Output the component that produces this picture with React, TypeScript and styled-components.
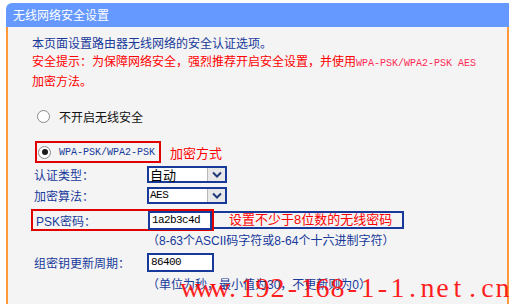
import styled, { createGlobalStyle } from 'styled-components';

const GlobalStyle = createGlobalStyle`
  html, body {
    margin: 0;
    padding: 0;
    background: #ffffff;
  }
  body {
    font-family: "Liberation Sans", "Noto Sans CJK SC", sans-serif;
    font-size: 12px;
  }
`;

const NAVY = '#17399a';
const RED = '#ff0000';
const ORANGE = '#ff9a3c';

const Page = styled.div`
  position: relative;
  width: 512px;
  height: 304px;
  overflow: hidden;
  box-sizing: border-box;
  padding: 3px 0 0 6px;
`;

const Panel = styled.div`
  width: 503px;
`;

const Header = styled.div`
  height: 24px;
  line-height: 24px;
  padding-left: 7px;
  background: #6699ff;
  border-top-left-radius: 6px;
  color: #ffffff;
  font-size: 12px;
  font-family: "Noto Sans CJK SC", sans-serif;
`;

const Content = styled.div`
  height: 277px;
  box-sizing: border-box;
  padding: 8px 0 0 24px;
  background: #f4f4f4;
  border-left: 2px solid ${ORANGE};
  border-right: 2px solid ${ORANGE};
`;

const Text = styled.p<{ $tone?: 'red' }>`
  margin: 0;
  line-height: 18px;
  white-space: nowrap;
  color: ${({ $tone }) => ($tone === 'red' ? RED : NAVY)};
`;

const Mono = styled.span<{ $color?: string }>`
  font-family: "Liberation Mono", monospace;
  font-size: 10px;
  color: ${({ $color }) => $color || 'inherit'};
`;

const RadioRow = styled.label`
  display: flex;
  align-items: center;
  height: 18px;
  margin-top: 16px;
  padding-left: 5px;
  gap: 9px;
  color: #111;
  font-size: 12px;
`;

const Radio = styled.span<{ $checked?: boolean }>`
  position: relative;
  flex: 0 0 13px;
  width: 13px;
  height: 13px;
  box-sizing: border-box;
  border-radius: 50%;
  border: 1px solid #8a8a8a;
  background: #ffffff;

  &::after {
    content: '';
    display: ${({ $checked }) => ($checked ? 'block' : 'none')};
    position: absolute;
    left: 2.5px;
    top: 2.5px;
    width: 6px;
    height: 6px;
    border-radius: 50%;
    background: #1a1a1a;
  }
`;

const MethodRow = styled.div`
  display: flex;
  align-items: center;
  margin-top: 16px;
`;

const MethodBox = styled.div`
  display: flex;
  align-items: center;
  gap: 8px;
  height: 22px;
  box-sizing: border-box;
  margin-left: 3px;
  padding: 0 4px 0 1px;
  border: 2px solid #e00000;
  color: ${NAVY};
`;

const MethodNote = styled.span`
  margin-left: 9px;
  color: ${RED};
  font-size: 13px;
`;

const FieldRow = styled.div<{ $top?: number }>`
  display: flex;
  align-items: center;
  height: 21px;
  margin-top: ${({ $top }) => $top ?? 0}px;
`;

const Label = styled.span<{ $w?: number }>`
  flex: 0 0 ${({ $w }) => $w ?? 113}px;
  padding-left: 2px;
  color: ${NAVY};
`;

const Select = styled.div<{ $mono?: boolean }>`
  display: flex;
  align-items: center;
  width: 80px;
  height: 17px;
  box-sizing: border-box;
  border: 2px solid ${NAVY};
  background: #ffffff;
  color: #000;
  font-size: ${({ $mono }) => ($mono ? '11px' : '13px')};
  font-family: ${({ $mono }) =>
    $mono ? '"Liberation Mono", monospace' : '"Noto Sans CJK SC", sans-serif'};
  letter-spacing: ${({ $mono }) => ($mono ? '-0.5px' : '0')};
`;

const SelectValue = styled.span`
  flex: 1;
  padding-left: 1px;
  line-height: 13px;
`;

const SelectButton = styled.span`
  display: flex;
  align-items: center;
  justify-content: center;
  width: 18px;
  height: 100%;
  box-sizing: border-box;
  background: #e8e8e8;
  border-left: 1px solid #b8b8b8;
`;

const Input = styled.div<{ $w?: number }>`
  width: ${({ $w }) => $w ?? 64}px;
  height: 19px;
  box-sizing: border-box;
  padding-left: 2px;
  border: 2px solid ${NAVY};
  background: #ffffff;
  color: #000;
  font-family: "Liberation Mono", monospace;
  font-size: 11px;
  letter-spacing: -0.6px;
  line-height: 15px;
`;

const PskRow = styled.div`
  display: flex;
  align-items: center;
  margin-top: 3px;
`;

const RedBox = styled.div`
  display: flex;
  align-items: center;
  width: 183px;
  height: 22px;
  box-sizing: border-box;
  margin-left: -1px;
  padding-left: 1px;
  border: 2px solid #e00000;
`;

const BlueNote = styled.div`
  height: 18px;
  box-sizing: border-box;
  padding: 0 10px 0 15px;
  border: 2px solid ${NAVY};
  border-left: none;
  color: ${RED};
  font-size: 13px;
  line-height: 14px;
`;

const Hint = styled(Text)<{ $top: number }>`
  margin-top: ${({ $top }) => $top}px;
  margin-left: 115px;
`;

const Watermark = styled.div`
  position: absolute;
  left: 180px;
  top: 274px;
  display: flex;
  font-family: "Liberation Serif", serif;
  font-size: 28px;
  line-height: 28px;
  color: rgba(255, 0, 0, 0.88);
  pointer-events: none;
`;

const Glyph = styled.span`
  display: inline-block;
  width: 15px;
  text-align: center;
`;

const Chevron = () => (
  <svg width="10" height="7" viewBox="0 0 10 7">
    <polyline points="1,1.5 5,5.5 9,1.5" fill="none" stroke="#1f3a7a" strokeWidth="2" />
  </svg>
);

const MARK = 'www.192-168-1-1.net.cn';

export default function App() {
  return (
    <>
      <GlobalStyle />
      <Page>
        <Panel>
          <Header>无线网络安全设置</Header>
          <Content>
            <Text>本页面设置路由器无线网络的安全认证选项。</Text>
            <Text $tone="red">
              安全提示：为保障网络安全，强烈推荐开启安全设置，并使用
              <Mono $color="#ff2a55">WPA-PSK/WPA2-PSK AES</Mono>
              <br />
              加密方法。
            </Text>

            <RadioRow>
              <Radio />
              不开启无线安全
            </RadioRow>

            <MethodRow>
              <MethodBox>
                <Radio $checked />
                <Mono>WPA-PSK/WPA2-PSK</Mono>
              </MethodBox>
              <MethodNote>加密方式</MethodNote>
            </MethodRow>

            <FieldRow $top={1}>
              <Label>认证类型：</Label>
              <Select>
                <SelectValue>自动</SelectValue>
                <SelectButton>
                  <Chevron />
                </SelectButton>
              </Select>
            </FieldRow>
            <FieldRow>
              <Label>加密算法：</Label>
              <Select $mono>
                <SelectValue>AES</SelectValue>
                <SelectButton>
                  <Chevron />
                </SelectButton>
              </Select>
            </FieldRow>

            <PskRow>
              <RedBox>
                <Label $w={112}>PSK密码：</Label>
                <Input>1a2b3c4d</Input>
              </RedBox>
              <BlueNote>设置不少于8位数的无线密码</BlueNote>
            </PskRow>
            <Hint $top={1}>（8-63个ASCII码字符或8-64个十六进制字符）</Hint>

            <FieldRow $top={2}>
              <Label>组密钥更新周期：</Label>
              <Input $w={67}>86400</Input>
            </FieldRow>
            <Hint $top={3}>（单位为秒，最小值为30，不更新则为0）</Hint>
          </Content>
        </Panel>
        <Watermark>
          {MARK.split('').map((c, i) => (
            <Glyph key={i}>{c}</Glyph>
          ))}
        </Watermark>
      </Page>
    </>
  );
}
